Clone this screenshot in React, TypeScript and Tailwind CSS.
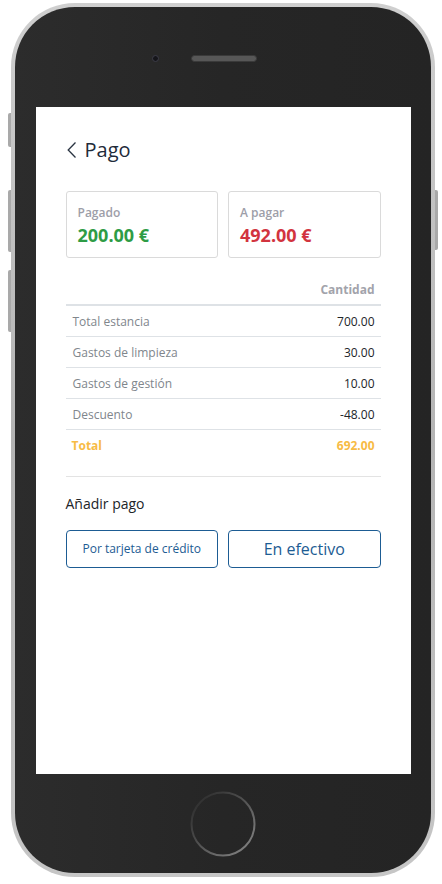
const rows = [
  { label: "Total estancia", amount: "700.00" },
  { label: "Gastos de limpieza", amount: "30.00" },
  { label: "Gastos de gestión", amount: "10.00" },
  { label: "Descuento", amount: "-48.00" },
];

function SummaryCard({ label, value, tone }: { label: string; value: string; tone: string }) {
  return (
    <div className="h-[67px] rounded-[3px] border border-[#dadada] px-[11px] pt-[13px]">
      <div className="text-[12px] font-semibold leading-[16px] text-[#9d9ea8]">{label}</div>
      <div className={`mt-[2px] text-[18px] font-bold leading-[24px] ${tone}`}>{value}</div>
    </div>
  );
}

function PaymentScreen() {
  return (
    <div className="h-[667px] w-[375px] bg-white px-[30px] pt-[29px] text-[#212529]">
      {/* Header */}
      <div className="flex h-[28px] items-center">
        <svg width="10" height="16" viewBox="0 0 10 16" className="ml-[1px]">
          <polyline points="8.5,0.5 1.2,8 8.5,15.5" fill="none" stroke="#2a3442" strokeWidth="1.3" />
        </svg>
        <span className="ml-[8px] text-[20px] leading-[28px] text-[#1f2b3a]">Pago</span>
      </div>

      {/* Totals */}
      <div className="mt-[27px] grid grid-cols-2 gap-[10px]">
        <SummaryCard label="Pagado" value="200.00 €" tone="text-[#2e9c45]" />
        <SummaryCard label="A pagar" value="492.00 €" tone="text-[#d2343f]" />
      </div>

      {/* Breakdown */}
      <div className="mt-[19px]">
        <div className="flex h-[29px] items-center justify-end border-b-2 border-[#dee2e6] pb-[2px] pr-[6px] text-[12px] font-bold text-[#a2a3ab]">
          Cantidad
        </div>
        {rows.map((r) => (
          <div
            key={r.label}
            className="flex h-[31px] items-center justify-between border-b border-[#dee2e6] pl-[7px] pr-[6px] pt-[1px] text-[12px]"
          >
            <span className="text-[#80868c]">{r.label}</span>
            <span className="text-[#212529]">{r.amount}</span>
          </div>
        ))}
        <div className="flex h-[31px] items-center justify-between pl-[6px] pr-[6px] pt-[1px] text-[12px] font-bold text-[#f7bb45]">
          <span>Total</span>
          <span>692.00</span>
        </div>
      </div>

      <div className="mt-[15px] h-px bg-[#e3e3e3]" />

      {/* Add payment */}
      <div className="mt-[17px] text-[14px] leading-[20px] text-[#212529]">Añadir pago</div>
      <div className="mt-[16px] grid grid-cols-2 gap-[10px]">
        <button className="h-[38px] rounded-[4px] border border-[#1d5c93] text-[12px] text-[#1d5c93]">
          Por tarjeta de crédito
        </button>
        <button className="h-[38px] rounded-[4px] border border-[#1d5c93] text-[16px] text-[#1d5c93]">
          En efectivo
        </button>
      </div>
    </div>
  );
}

function HomeButton() {
  return (
    <svg width="68" height="68" viewBox="0 0 68 68">
      <defs>
        <linearGradient id="hb" x1="0" y1="0" x2="1" y2="1">
          <stop offset="0" stopColor="#262626" />
          <stop offset="0.4" stopColor="#4a4a4a" />
          <stop offset="1" stopColor="#8a8a8a" />
        </linearGradient>
      </defs>
      <circle cx="34" cy="34" r="31.5" fill="none" stroke="url(#hb)" strokeWidth="2" />
    </svg>
  );
}

export default function App() {
  return (
    <div
      className="relative h-[884px] w-[442px] bg-white"
      style={{ fontFamily: '"Open Sans", "Noto Sans", sans-serif' }}
    >
      {/* side buttons */}
      <div className="absolute left-[8px] top-[113px] h-[34px] w-[4px] rounded-l-[2px] bg-[#a9a9a9]" />
      <div className="absolute left-[8px] top-[190px] h-[62px] w-[4px] rounded-l-[2px] bg-[#a9a9a9]" />
      <div className="absolute left-[8px] top-[270px] h-[62px] w-[4px] rounded-l-[2px] bg-[#a9a9a9]" />
      <div className="absolute left-[434px] top-[190px] h-[60px] w-[4px] rounded-r-[2px] bg-[#a9a9a9]" />

      <div className="absolute left-[11px] top-[3px] h-[874px] w-[424px] rounded-[64px] bg-gradient-to-b from-[#cfcfcf] via-[#b4b4b4] to-[#c6c6c6] p-[4px]">
        <div className="flex h-full w-full flex-col items-center rounded-[60px] bg-gradient-to-r from-[#2c2c2c] via-[#262626] to-[#242424]">
          <div className="flex h-[100px] w-full items-center pl-[137px] pt-[2px]">
            <div className="h-[7px] w-[7px] rounded-full border border-[#3d3d48] bg-[#15151a]" />
            <div className="ml-[32px] h-[7px] w-[66px] rounded-full border border-[#3a3a3a] bg-[#575757]" />
          </div>
          <PaymentScreen />
          <div className="flex h-[99px] w-full items-center justify-center">
            <HomeButton />
          </div>
        </div>
      </div>
    </div>
  );
}
